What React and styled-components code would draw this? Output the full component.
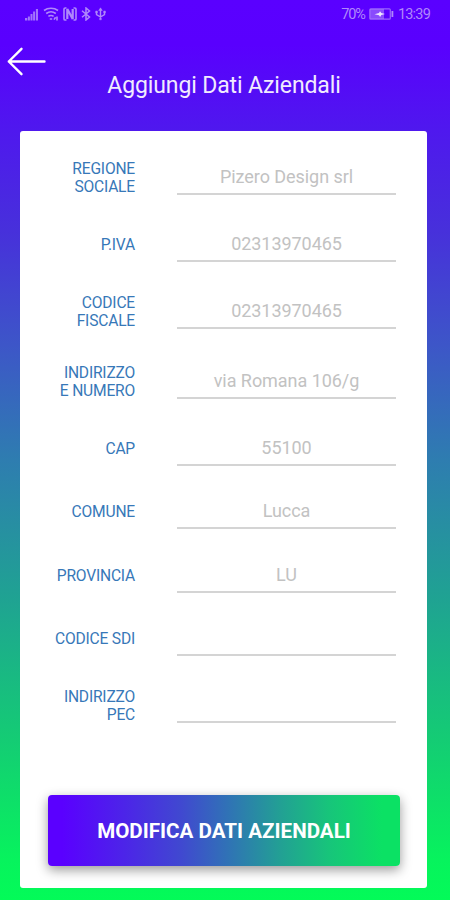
import { styled, createGlobalStyle } from "styled-components";

const GlobalStyle = createGlobalStyle`
  * {
    box-sizing: border-box;
  }
  body {
    margin: 0;
    font-family: Roboto, "Liberation Sans", sans-serif;
  }
`;

const Screen = styled.div`
  display: flex;
  flex-direction: column;
  width: 450px;
  height: 900px;
  overflow: hidden;
  background: linear-gradient(
    #5a00ff 0,
    #5900fe 45px,
    #4f18ee 130px,
    #4730db 230px,
    #3d56c8 345px,
    #2e7db0 460px,
    #1fa392 600px,
    #14cc74 740px,
    #07f35d 860px,
    #03fb58 900px
  );
`;
const StatusBar = styled.div`
  display: flex;
  justify-content: space-between;
  align-items: center;
  height: 28px;
  padding: 0 20px 0 25px;
  color: #b088fb;
`;
const StatusText = styled.span`
  font-size: 14.5px;
  line-height: 16px;
  padding-top: 2px;
  letter-spacing: ${(props) => props.$spacing || "0"};
`;
const StatusGroup = styled.div`
  display: flex;
  align-items: center;
  gap: ${(props) => props.$gap};
  svg {
    display: block;
  }
`;
const Header = styled.header`
  height: 103px;
  padding-top: 19px;
`;
const BackBtn = styled.button`
  display: block;
  margin: 0 0 0 7px;
  padding: 0;
  border: 0;
  background: none;
  svg {
    display: block;
  }
`;
const Title = styled.h1`
  margin: -5px 2px 0 0;
  font-size: 23px;
  line-height: 29px;
  font-weight: 400;
  letter-spacing: -0.12px;
  text-align: center;
  color: #f1eaff;
`;
const Card = styled.main`
  width: 407px;
  height: 757px;
  margin-left: 20px;
  padding: 0 27px 0 28px;
  background: #fff;
  border-radius: 3px;
`;
const Row = styled.div`
  display: grid;
  grid-template-columns: 87px 219px;
  column-gap: 42px;
  align-items: end;
  height: ${(props) => props.$height}px;
`;
const Label = styled.label`
  font-size: 15.6px;
  line-height: 18px;
  letter-spacing: -0.2px;
  text-align: right;
  white-space: pre-line;
  color: #3778b8;
  margin-bottom: ${(props) => (props.$double ? -1 : 8)}px;
`;
const Value = styled.div`
  height: 31px;
  border-bottom: 2px solid #d4d4d4;
  font-size: 18px;
  line-height: 25px;
  letter-spacing: -0.05px;
  text-align: center;
  color: #c2c2c2;
`;
const SubmitBtn = styled.button`
  display: block;
  width: 352px;
  height: 71px;
  margin-top: 72px;
  padding: 0;
  border: 0;
  border-radius: 4px;
  background: linear-gradient(
    90deg,
    #5a00ff 4%,
    #4c25e8 22%,
    #4049d0 38%,
    #3072b6 51%,
    #22a094 66%,
    #17c57a 80%,
    #0be164 95%
  );
  box-shadow: 0 4px 12px rgba(0, 0, 0, 0.4);
  font-family: inherit;
  font-size: 20.6px;
  font-weight: 700;
  color: #fff;
`;

const fields = [
  { label: "REGIONE\nSOCIALE", value: "Pizero Design srl", height: 64 },
  { label: "P.IVA", value: "02313970465", height: 67 },
  { label: "CODICE\nFISCALE", value: "02313970465", height: 67 },
  { label: "INDIRIZZO\nE NUMERO", value: "via Romana 106/g", height: 70 },
  { label: "CAP", value: "55100", height: 67 },
  { label: "COMUNE", value: "Lucca", height: 63 },
  { label: "PROVINCIA", value: "LU", height: 64 },
  { label: "CODICE SDI", value: "", height: 63 },
  { label: "INDIRIZZO\nPEC", value: "", height: 67 },
];

function SignalIcon() {
  return (
    <svg width="14" height="14" viewBox="0 0 14 14" fill="currentColor">
      <path d="M0 11h2.300v2.500H0zM2.900 9.500h2v4h-2zM5.500 7h2v6.500h-2zM8.100 4.500h2v9h-2zM10.900 2H13v11.500h-2.100z" opacity=".85" />
    </svg>
  );
}

function WifiIcon() {
  return (
    <svg width="16" height="14" viewBox="0 0 16 14" fill="none" stroke="currentColor" strokeWidth="1.6">
      <path d="M1 3.500C5 .5 11 .5 15 3.500M3.200 6.500c3-2.200 6.600-2.200 9.600 0M5.400 9.400c1.700-1.200 3.500-1.200 5.200 0" />
      <path d="M6.800 12h2.400M11 12.600l1.600-2.400M14 9.500v4" />
    </svg>
  );
}

function NfcIcon() {
  return (
    <svg width="14" height="14" viewBox="0 0 14 14" fill="none" stroke="currentColor">
      <path d="M3.500 13H2.200C1.400 13 1 12.700 1 11.900V2.100C1 1.300 1.400 1 2.200 1h1.300M10.500 1h1.300c.8 0 1.200.3 1.200 1.100v9.800c0 .8-.4 1.100-1.200 1.100h-1.300" strokeWidth="1.600" />
      <path d="M4.300 12V2l5.400 10V2" strokeWidth="2.200" />
    </svg>
  );
}

function BluetoothIcon() {
  return (
    <svg width="10" height="14" viewBox="0 0 10 14" fill="none" stroke="currentColor" strokeWidth="1.5">
      <path d="M1 3.700l7.500 6.300L5 13V1l3.500 3L1 10.300" />
    </svg>
  );
}

function UsbIcon() {
  return (
    <svg width="11" height="14" viewBox="0 0 11 14" fill="none" stroke="currentColor" strokeWidth="1.4">
      <path d="M5.500 2v10M1.500 5.500v2l4 2.500 4-2.500v-2" />
      <path d="M3.700 3.500L5.500.8l1.800 2.700zM.7 4h1.700v2H.7zM8.700 4h1.700v2H8.700zM4.700 11.500h1.600v1.300H4.700z" fill="currentColor" strokeWidth=".5" />
    </svg>
  );
}

function BatteryIcon() {
  return (
    <svg width="25" height="12" viewBox="0 0 25 12" fill="none" stroke="currentColor">
      <rect x=".8" y=".8" width="20.500" height="10.400" rx="1" strokeWidth="1.200" opacity=".75" />
      <path d="M1 1h14v10H1z" fill="currentColor" stroke="none" opacity=".55" />
      <path d="M5.500 6.300L10 5l1-1.800L12.300 5 16 6l-3.700 1-1.200 1.900L10 7.300z" fill="#efe5ff" stroke="none" />
      <path d="M23.400 3v6" strokeWidth="1.800" />
    </svg>
  );
}

function App() {
  return (
    <Screen>
      <GlobalStyle />
      <StatusBar>
        <StatusGroup $gap="4px">
          <SignalIcon />
          <WifiIcon />
          <NfcIcon />
          <BluetoothIcon />
          <UsbIcon />
        </StatusGroup>
        <StatusGroup $gap="4px">
          <StatusText $spacing="-1.1px">70%</StatusText>
          <BatteryIcon />
          <StatusText $spacing="-0.8px">13:39</StatusText>
        </StatusGroup>
      </StatusBar>

      <Header>
        <BackBtn aria-label="Indietro">
          <svg width="40" height="29" viewBox="0 0 40 29" fill="none" stroke="#fff" strokeWidth="2.4" strokeLinecap="round" strokeLinejoin="round">
            <path d="M37.500 14.500H1.800M14.500 1.800L1.800 14.500l12.700 12.700" />
          </svg>
        </BackBtn>
        <Title>Aggiungi Dati Aziendali</Title>
      </Header>

      <Card>
        {fields.map((field) => (
          <Row key={field.label} $height={field.height}>
            <Label $double={field.label.includes("\n")}>{field.label}</Label>
            <Value>{field.value}</Value>
          </Row>
        ))}
        <SubmitBtn>MODIFICA DATI AZIENDALI</SubmitBtn>
      </Card>
    </Screen>
  );
}
export default App;
